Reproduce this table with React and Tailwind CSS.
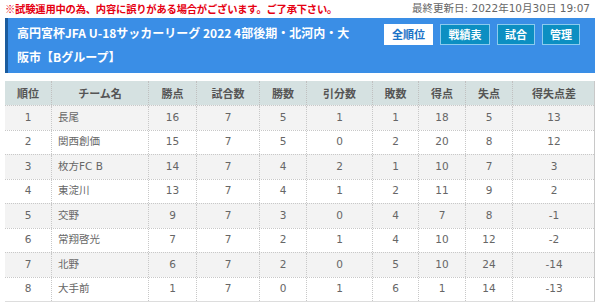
const rows = [
  ["1", "長尾", "16", "7", "5", "1", "1", "18", "5", "13"],
  ["2", "関西創価", "15", "7", "5", "0", "2", "20", "8", "12"],
  ["3", "枚方FC B", "14", "7", "4", "2", "1", "10", "7", "3"],
  ["4", "東淀川", "13", "7", "4", "1", "2", "11", "9", "2"],
  ["5", "交野", "9", "7", "3", "0", "4", "7", "8", "-1"],
  ["6", "常翔啓光", "7", "7", "2", "1", "4", "10", "12", "-2"],
  ["7", "北野", "6", "7", "2", "0", "5", "10", "24", "-14"],
  ["8", "大手前", "1", "7", "0", "1", "6", "1", "14", "-13"],
];
const heads = ["順位", "チーム名", "勝点", "試合数", "勝数", "引分数", "敗数", "得点", "失点", "得失点差"];
const grid = "grid grid-cols-[47px_97px_48px_63px_47px_66px_46px_47px_47px_82px]";

export default function App() {
  return (
    <div className="w-[600px] h-[305px] overflow-hidden bg-white" style={{ fontFamily: '"DejaVu Sans", "Noto Sans CJK JP", sans-serif' }}>
      <div className="flex items-center justify-between h-[17px] pl-[5px] pr-[10px]">
        <span className="text-[10.3px] font-bold text-[#e60012] tracking-[-0.2px]" style={{ fontFamily: '"Noto Sans CJK JP", sans-serif' }}>※試験運用中の為、内容に誤りがある場合がございます。ご了承下さい。</span>
        <span className="text-[10.5px] text-[#666]" style={{ fontFamily: '"DejaVu Sans", "Noto Sans CJK JP", sans-serif' }}>最終更新日: 2022年10月30日 19:07</span>
      </div>
      <div className="mx-[5px] mt-[1px] h-[55px] bg-[#3a8ee6] border-l-[3px] border-[#1b5c9e] flex justify-between pl-[9px] pr-[15px]">
        <div className="text-white font-bold text-[12px] leading-[24px] pt-[3px]" style={{ fontFamily: '"Noto Sans CJK JP", sans-serif' }}>
          高円宮杯JFA U-18サッカーリーグ 2022 4部後期・北河内・大<br />阪市【Bグループ】
        </div>
        <div className="flex gap-[7px] pt-[6px] items-start" style={{ fontFamily: '"Noto Sans CJK JP", sans-serif' }}>
          <div className="h-[21px] w-[49px] bg-white text-[#1a72c7] text-[11px] font-bold flex items-center justify-center">全順位</div>
          <div className="h-[21px] w-[50px] bg-[#0c8fc2] border border-[#8ccbee] text-white text-[11px] font-bold flex items-center justify-center">戦績表</div>
          <div className="h-[21px] w-[38px] bg-[#0c8fc2] border border-[#8ccbee] text-white text-[11px] font-bold flex items-center justify-center">試合</div>
          <div className="h-[21px] w-[38px] bg-[#0c8fc2] border border-[#8ccbee] text-white text-[11px] font-bold flex items-center justify-center">管理</div>
        </div>
      </div>
      <div className="mx-[5px] mt-[8px] border-r border-[#c8c8c8] border-b border-b-[#ddd]">
        <div className={`${grid} h-[24px] bg-[#d5e1e1]`}>
          {heads.map((h, i) => (
            <div key={i} className={`flex items-center justify-center text-[11px] font-bold text-[#555] ${i < 9 ? "border-r border-dotted border-[#c0c0c0]" : ""}`} style={{ fontFamily: '"Noto Sans CJK JP", sans-serif' }}>{h}</div>
          ))}
        </div>
        {rows.map((r, ri) => (
          <div key={ri} className={`${grid} h-[24.5px] border-t border-dotted border-[#c8c8c8] ${ri % 2 === 0 ? "bg-[#f3f3f3]" : "bg-white"}`}>
            {r.map((c, i) => (
              <div key={i} className={`flex items-center ${i === 1 ? "justify-start pl-[6px]" : "justify-center"} text-[10.5px] text-[#666] ${i < 9 ? "border-r border-dotted border-[#c8c8c8]" : ""}`}>{c}</div>
            ))}
          </div>
        ))}
      </div>
    </div>
  );
}
